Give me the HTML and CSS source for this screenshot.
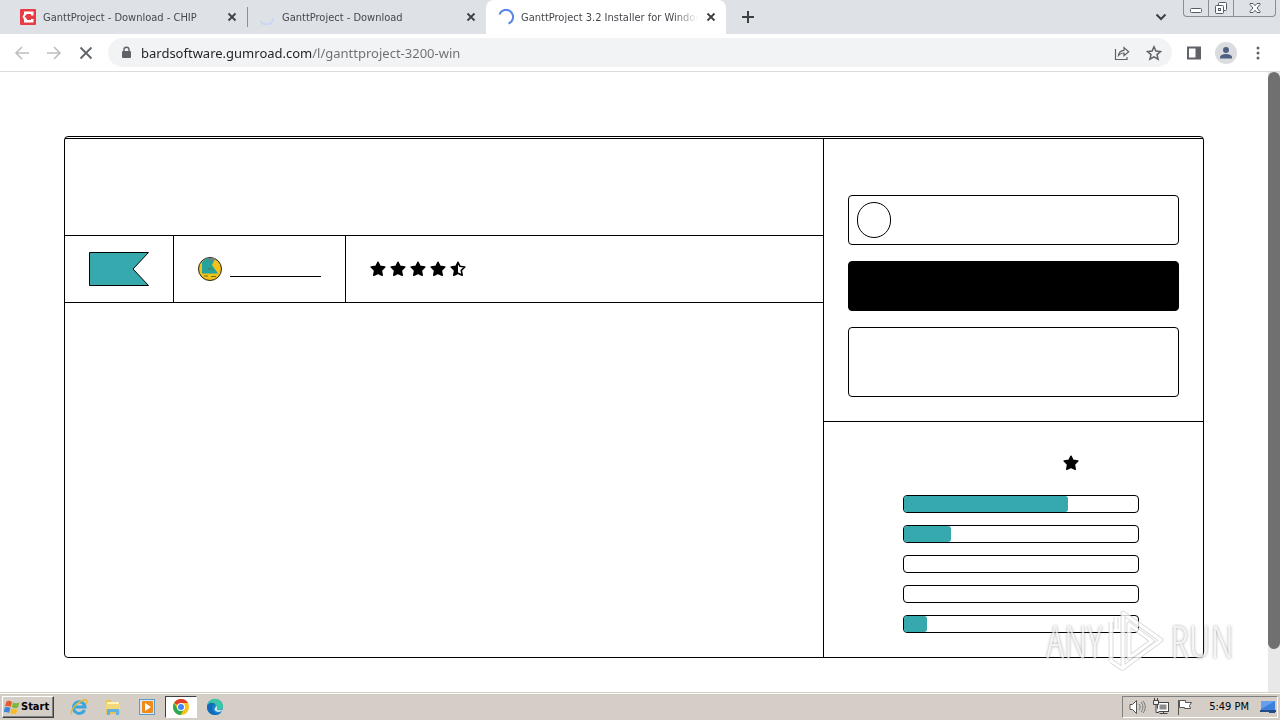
FILE: index.html
```html
<!DOCTYPE html>
<html lang="en">
<head>
	<meta charset="UTF-8">
	<meta name="viewport" content="width=device-width, initial-scale=1.0">
	<title>GanttProject 3.2 Installer for Windows</title>
	<link rel="stylesheet" href="styles.css">
</head>
<body>

	<svg class="defs" aria-hidden="true">
		<symbol id="star" viewBox="0 0 16 16">
			<path d="M8 1.300l2 4 4.800.7-3.500 3.400.9 4.800L8 12.300l-4.200 1.900.9-4.800L1.200 6 6 5.300z" stroke="#000" stroke-width="1.600" stroke-linejoin="round"/>
		</symbol>
		<symbol id="close" viewBox="0 0 10 10">
			<path d="M1.5 1.5l7 7M8.5 1.5l-7 7" stroke="#3c4043" stroke-width="1.8"/>
		</symbol>
	</svg>

	<header class="browser">
		<div class="tabs">
			<div class="tab">
				<svg class="tab__icon" viewBox="0 0 16 16"><rect width="16" height="16" rx="1" fill="#e63c46"/><path d="M4 2.500h9.500v4H11V5H7L4.500 7.500 7 10v1h4v-1h2.500v3.500H4v-3L2.500 7.500 4 5z" fill="#fff"/><path d="M7 5h4v2.500L9 9 6 7z" fill="#e63c46"/></svg>
				<a class="tab__title" href="#">GanttProject - Download - CHIP</a>
				<button class="tab__close" aria-label="Close tab"><svg viewBox="0 0 10 10"><use href="#close"/></svg></button>
			</div>
			<div class="tab tab--divided">
				<svg class="tab__icon" viewBox="0 0 16 16" fill="none" stroke="#c9d6f6" stroke-width="2"><path d="M14.500 9A7 7 0 0 1 1.500 12"/></svg>
				<a class="tab__title" href="#">GanttProject - Download</a>
				<button class="tab__close" aria-label="Close tab"><svg viewBox="0 0 10 10"><use href="#close"/></svg></button>
			</div>
			<div class="tab tab--active">
				<svg class="tab__icon" viewBox="0 0 16 16" fill="none" stroke="#5a86e6" stroke-width="2"><path d="M1.500 5.500A7 7 0 1 1 10.500 14.500"/></svg>
				<a class="tab__title" href="#">GanttProject 3.2 Installer for Windows</a>
				<button class="tab__close" aria-label="Close tab"><svg viewBox="0 0 10 10"><use href="#close"/></svg></button>
			</div>
			<button class="tabs__new" aria-label="New tab"><svg viewBox="0 0 12 12"><path d="M6 0v12M0 6h12" stroke="#3c4043" stroke-width="2"/></svg></button>
			<button class="tabs__search" aria-label="Search tabs"><svg viewBox="0 0 12 12"><path d="M1.500 3.500L6 8l4.500-4.500" fill="none" stroke="#3c4043" stroke-width="2"/></svg></button>
			<div class="window">
				<button class="window__btn" aria-label="Minimize"><svg viewBox="0 0 14 14"><rect x="1.500" y="7.500" width="11" height="4" rx="1" fill="#fff" stroke="#555b66"/></svg></button>
				<button class="window__btn" aria-label="Restore"><svg viewBox="0 0 14 14" fill="#fff" stroke="#555b66"><rect x="4.500" y="1.500" width="8" height="8" rx="1"/><rect x="1.500" y="4.500" width="8" height="8" rx="1"/><rect x="4.500" y="7.500" width="2" height="2"/></svg></button>
				<button class="window__btn window__btn--close" aria-label="Close"><svg viewBox="0 0 14 14"><path d="M2 2.500h3l2 2.200 2-2.200h3v1L9 7l3 3.500v1H9L7 9.300 5 11.500H2v-1L5 7 2 3.500z" fill="#fff" stroke="#555b66"/></svg></button>
			</div>
		</div>

		<div class="toolbar">
			<button class="toolbar__btn" aria-label="Back"><svg viewBox="0 0 16 16" fill="none" stroke="#bcbec1" stroke-width="1.600"><path d="M15 8H2M8 2L2 8l6 6"/></svg></button>
			<button class="toolbar__btn" aria-label="Forward"><svg viewBox="0 0 16 16" fill="none" stroke="#bcbec1" stroke-width="1.600"><path d="M1 8h13M8 2l6 6-6 6"/></svg></button>
			<button class="toolbar__btn" aria-label="Stop"><svg viewBox="0 0 16 16" fill="none" stroke="#5f6368" stroke-width="1.800"><path d="M2.500 2.500l11 11M13.500 2.500l-11 11"/></svg></button>
			<div class="address">
				<svg class="address__lock" viewBox="0 0 12 14"><rect x="2" y="5" width="9" height="7" rx="1" fill="#5f6368"/><path d="M4 5.500V3.800a2.500 2.500 0 0 1 5 0v1.700" fill="none" stroke="#5f6368" stroke-width="1.400"/></svg>
				<input class="address__input" type="text" aria-label="Address" value="bardsoftware.gumroad.com/l/ganttproject-3200-win">
				<button class="toolbar__btn" aria-label="Share"><svg viewBox="0 0 16 16" fill="none" stroke="#5f6368" stroke-width="1.200"><path d="M1.500 4v10.500h11.500V12M4.500 10.500C5 7 7 5.500 10 5.300V2.500l4.700 4.200-4.700 4V8C7.500 8 6 8.600 4.500 10.500z"/></svg></button>
				<button class="toolbar__btn" aria-label="Bookmark"><svg viewBox="0 0 16 16" fill="none" stroke="#5f6368" stroke-width="1.500"><path d="M8 1.800l1.900 4.300 4.600.4L11 9.600l1.100 4.600L8 11.800l-4.100 2.400L5 9.600 1.500 6.500l4.600-.4z"/></svg></button>
			</div>
			<button class="toolbar__btn" aria-label="Side panel"><svg viewBox="0 0 16 16"><path d="M1 1.500h14v13H1zM3 3.500v9h6.500v-9z" fill="#5f6368" fill-rule="evenodd"/></svg></button>
			<button class="toolbar__btn toolbar__btn--avatar" aria-label="Profile"><svg viewBox="0 0 22 22"><circle cx="11" cy="11" r="11" fill="#dadce0"/><circle cx="11" cy="8" r="3" fill="#4f5f82"/><path d="M5 16.500v-1.300c0-2 3.500-3.200 6-3.200s6 1.200 6 3.200v1.300z" fill="#4f5f82"/></svg></button>
			<button class="toolbar__btn" aria-label="Menu"><svg viewBox="0 0 16 16" fill="#5f6368"><circle cx="8" cy="3" r="1.500"/><circle cx="8" cy="8" r="1.500"/><circle cx="8" cy="13" r="1.500"/></svg></button>
		</div>
	</header>

	<div class="view">
		<main class="page">
			<article class="product">
				<section class="product__main">
					<div class="product__title"></div>
					<div class="details">
						<div class="details__cell">
							<svg class="price" viewBox="0 0 60 34"><path d="M.5.5h59L44 17l15.500 16.500H.5z" fill="#36a9ae" stroke="#000"/></svg>
						</div>
						<div class="details__cell details__cell--seller">
							<svg class="avatar" viewBox="0 0 24 24"><circle cx="12" cy="12" r="11.500" fill="#f3c318" stroke="#222"/><path d="M4 5L8 1.500l9 .5-3 6 6 8.500H4z" fill="#25a29b"/><path d="M9 1h8l-3 4z" fill="#70808a"/><path d="M10 12.500c2-2 4-1 5 1M6 19h4m3 .5h5" fill="none" stroke="#65752f"/></svg>
							<a class="seller" href="#" aria-label="Seller"></a>
						</div>
						<div class="details__cell details__cell--rating">
							<svg class="star"><use href="#star"/></svg>
							<svg class="star"><use href="#star"/></svg>
							<svg class="star"><use href="#star"/></svg>
							<svg class="star"><use href="#star"/></svg>
							<svg class="star" viewBox="0 0 16 16"><path d="M8 1.300l2 4 4.800.7-3.500 3.400.9 4.800L8 12.300l-4.200 1.900.9-4.800L1.200 6 6 5.300z" fill="none" stroke="#000" stroke-width="1.600" stroke-linejoin="round"/><path d="M8 1.300v11l-4.200 1.900.9-4.800L1.200 6 6 5.300z"/></svg>
						</div>
					</div>
				</section>

				<aside class="product__side">
					<section class="buy">
						<label class="amount">
							<span class="amount__currency"></span>
							<input class="amount__input" type="text" aria-label="Amount">
						</label>
						<button class="buy__btn" aria-label="Buy"></button>
						<div class="buy__info"></div>
					</section>
					<section class="ratings">
						<div class="ratings__head"><svg class="star"><use href="#star"/></svg></div>
						<div class="bar"><div class="bar__fill" style="width: 70%"></div></div>
						<div class="bar"><div class="bar__fill" style="width: 20%"></div></div>
						<div class="bar"></div>
						<div class="bar"></div>
						<div class="bar"><div class="bar__fill" style="width: 10%"></div></div>
					</section>
				</aside>
			</article>
		</main>
		<div class="scrollbar"><div class="scrollbar__thumb"></div></div>

		<div class="watermark">
			<span>ANY</span>
			<svg class="watermark__logo" viewBox="0 0 60 62" fill="none" stroke-linejoin="round"><g stroke="#d2d2d2" stroke-width="5"><path d="M17 3l38 27-38 28V3z"/><path d="M23 14v34l23-17zM5 12v39M10 7v12M5 51l12 8"/></g><g stroke="#fff" stroke-width="3"><path d="M17 3l38 27-38 28V3z"/><path d="M23 14v34l23-17zM5 12v39M10 7v12M5 51l12 8"/></g></svg>
			<span>RUN</span>
		</div>
	</div>

	<footer class="taskbar">
		<button class="start">
			<svg class="start__logo" viewBox="0 0 16 16"><path d="M2.500 2.500C5 1 6.500 2 8 3L6.700 8C5 7 3.500 6.500 1 7.500z" fill="#e8592b"/><path d="M9 3.500c2 1 4 1 6.500 0L14 8.500c-2 1-4 .8-6.300-.2z" fill="#7fb83c"/><path d="M.8 8.500c2.200-1 3.800-.7 5.600.4L5 14C3.500 13-1 12.800-.5 13.500z" fill="#3d87d6"/><path d="M7.400 9.400c2 1 4 1.200 6.300.3l-1.400 4.700c-2 1-4 .8-6.200-.3z" fill="#f7bd25"/></svg>
			Start
		</button>
		<nav class="apps">
			<button class="apps__btn" aria-label="Internet Explorer"><svg viewBox="0 0 18 18" fill="none"><path d="M14.500 12A5.800 5.800 0 1 1 15 9H4.500" stroke="#3ba5e0" stroke-width="3"/><path d="M2 16C-1 13 7 4 14 2c4-1 3 2 2 4" stroke="#e5b93b" stroke-width="1.500"/></svg></button>
			<button class="apps__btn" aria-label="Explorer"><svg viewBox="0 0 18 18"><path d="M2 2h5l1 2h8v12H2z" fill="#e6c35c"/><path d="M3 4h12v8H3z" fill="#fff3b5"/><path d="M2 6h14v6H2z" fill="#f2d878"/><path d="M3 17v-6h12v6h-3v-3H6v3z" fill="#64b2dd"/></svg></button>
			<button class="apps__btn" aria-label="Media Player"><svg viewBox="0 0 18 18"><rect x="1.500" y="1.500" width="15" height="15" fill="#d6e9f5" stroke="#5a9bc7"/><rect x="4" y="3" width="11" height="12" rx="1" fill="#f18a1d"/><path d="M7 5l6 4-6 4z" fill="#fff"/></svg></button>
			<button class="apps__btn apps__btn--active" aria-label="Chrome"><svg viewBox="0 0 18 18"><circle cx="9" cy="9" r="8" fill="#fbc116"/><path d="M9 9L2.100 5A8 8 0 0 1 16 5H9z" fill="#e33b2e"/><path d="M2.100 5A8 8 0 0 0 8.500 17l4-6.500L9 12l-3.500-1z" fill="#2da94f"/><circle cx="9" cy="9" r="4" fill="#fff"/><circle cx="9" cy="9" r="3" fill="#4285f4"/></svg></button>
			<button class="apps__btn" aria-label="Edge"><svg viewBox="0 0 18 18"><circle cx="9" cy="9" r="8" fill="#1683d0"/><path d="M1 9a8 8 0 0 1 16-.500c0 3-3 4-6 3 1.500-1.500 0-4.500-3-4.500-3.500 0-5.500 1.500-7 2z" fill="#3bc6a5"/><path d="M1 9c0-4 6-6 9-2-4-1-5 4-2 7 2 2 5 2 7.500 0C12 19 1 18 1 9z" fill="#126bb9"/><path d="M10.500 8c2 2-.5 3 1 4 2 .7 4 .3 5.500-.500-2 3-6 3-8 1-1-1.500 0-3 1.500-4.500z" fill="#d5ebf3"/></svg></button>
		</nav>
		<div class="tray">
			<svg class="tray__icon" viewBox="0 0 18 18" fill="#fff" stroke="#555"><path d="M2 6.500h2.500l4-4v13l-4-4H2z"/><path d="M11 6c1.500 2 1.500 4 0 6M13 4c2.500 3 2.500 7 0 10M15 3c3 4 3 8 0 12" fill="none" stroke="#777"/></svg>
			<svg class="tray__icon" viewBox="0 0 18 18" fill="#fff" stroke="#444"><rect x="5.500" y="4.500" width="11" height="9"/><rect x="7.500" y="6.500" width="7" height="5" fill="#8c8c8c" stroke="none"/><path d="M7.500 15.500h8M11.500 13.500v2M1.500 2.500h5v4h-5zM2.500 0v2M5.500 0v2M4 7v7.500h3" fill="#eee"/></svg>
			<svg class="tray__icon" viewBox="0 0 18 18" fill="#fff" stroke="#555"><path d="M2.500 2v15M3.500 2.500h6v2h6l-2 3 1 3h-6v-1h-5z"/></svg>
			<time class="tray__clock">5:49 PM</time>
			<svg class="tray__desktop" viewBox="0 0 16 16"><path d="M1 2h14v10H1z" fill="#3d7fdc"/><path d="M1 2h14L1 10z" fill="#66a0ed"/><path d="M0 11h16v2H0zM9 13h6v1H9z" fill="#234b87"/></svg>
		</div>
	</footer>

</body>
</html>
```
FILE: styles.css
```css
* {
    margin: 0;
    padding: 0;
    box-sizing: border-box;
}

body {
    display: flex;
    flex-direction: column;
    height: 100vh;
    overflow: hidden;
    font-family: 'DejaVu Sans Condensed', 'DejaVu Sans', sans-serif;
    font-size: 11px;
    color: #000;
    background: #fff;
}

button,
input {
    border: none;
    background: none;
    font: inherit;
    color: inherit;
}

a {
    color: inherit;
    text-decoration: none;
}

svg {
    display: block;
    flex: none;
}

.defs {
    position: absolute;
    width: 0;
    height: 0;
}

/* tabs */
.tabs {
    display: flex;
    align-items: center;
    height: 34px;
    padding: 0 4px 0 8px;
    background: #dee1e6;
}

.tab {
    display: flex;
    align-items: center;
    flex: 0 1 239px;
    height: 34px;
    min-width: 0;
    padding: 0 7px 0 12px;
    color: #45484c;
}

.tab--divided {
    border-left: 1px solid #8b8e94;
    height: 20px;
    padding-left: 11px;
}

.tab--active {
    flex-basis: 240px;
    border-radius: 8px 8px 0 0;
    background: #fff;
}

.tab__icon {
    width: 16px;
    height: 16px;
    margin-right: 7px;
}

.tab__title {
    flex: 1;
    min-width: 0;
    overflow: hidden;
    white-space: nowrap;
    mask-image: linear-gradient(to left, transparent, #000 24px);
}

.tab__close {
    width: 16px;
    height: 16px;
    padding: 3px;
    margin-left: 5px;
}

.tab__close svg {
    width: 10px;
    height: 10px;
}

.tabs__new {
    padding: 0 16px;
}

.tabs__new svg,
.tabs__search svg {
    width: 12px;
    height: 12px;
}

.tabs__search {
    margin-left: auto;
    padding: 0 16px;
}

.window {
    display: flex;
    align-self: flex-start;
    height: 17px;
    border: 1px solid #8a8e96;
    border-top: none;
    border-radius: 0 0 4px 4px;
}

.window__btn {
    display: flex;
    justify-content: center;
    align-items: center;
    width: 25px;
    border-right: 1px solid #8a8e96;
}

.window__btn--close {
    width: 41px;
    border-right: none;
}

.window__btn svg {
    width: 14px;
    height: 14px;
}

/* toolbar */
.toolbar {
    display: flex;
    align-items: center;
    gap: 16px;
    height: 38px;
    padding: 0 14px;
    border-bottom: 1px solid #dcdcdc;
}

.toolbar__btn svg {
    width: 16px;
    height: 16px;
}

.toolbar__btn--avatar svg {
    width: 22px;
    height: 22px;
}

.toolbar__btn--avatar {
    margin: 0 -3px;
}

.address {
    display: flex;
    align-items: center;
    flex: 1;
    gap: 16px;
    height: 29px;
    padding: 0 10px 0 12px;
    margin: 0 -2px;
    border-radius: 15px;
    background: #f1f3f4;
}

.address__lock {
    width: 12px;
    height: 14px;
    margin-right: -7px;
}

/* host is black, path is grey */
.address__input {
    flex: 1;
    min-width: 0;
    font-family: 'Noto Sans', sans-serif;
    font-size: 13px;
    outline: none;
    color: transparent;
    background: linear-gradient(to right, #202124 171px, #6b6f74 171px);
    -webkit-background-clip: text;
    background-clip: text;
}

/* page */
.view {
    position: relative;
    display: flex;
    flex: 1;
    min-height: 0;
}

.page {
    display: flex;
    flex: 1;
    padding: 64px 64px 34px;
}

.product {
    display: grid;
    grid-template-columns: 1fr 380px;
    flex: 1;
    border: 1px solid #000;
    border-radius: 4px;
    padding-top: 1px;
}

.product__main,
.product__side {
    border-top: 1px solid #000;
}

.product__side {
    border-left: 1px solid #000;
}

.product__title {
    height: 96px;
}

.details {
    display: flex;
    border: 1px solid #000;
    border-width: 1px 0;
}

.details__cell {
    display: flex;
    align-items: center;
    height: 66px;
    padding: 0 24px;
    border-right: 1px solid #000;
}

.details__cell--seller {
    gap: 8px;
}

.details__cell--rating {
    gap: 4px;
    border-right: none;
}

.price {
    width: 60px;
    height: 34px;
}

.avatar {
    width: 24px;
    height: 24px;
}

.seller {
    width: 91px;
    height: 16px;
    border-bottom: 1px solid #000;
}

.star {
    width: 16px;
    height: 16px;
}

.buy {
    display: flex;
    flex-direction: column;
    gap: 16px;
    padding: 56px 24px 24px;
    border-bottom: 1px solid #000;
}

.amount,
.buy__btn,
.buy__info {
    height: 50px;
    border: 1px solid #000;
    border-radius: 4px;
}

.amount {
    display: flex;
    align-items: center;
    gap: 8px;
    padding: 0 8px;
}

.amount__currency {
    width: 34px;
    height: 36px;
    border: 1px solid #000;
    border-radius: 18px;
}

.amount__input {
    flex: 1;
    outline: none;
}

.buy__btn {
    background: #000;
}

.buy__info {
    height: 70px;
}

.ratings {
    display: flex;
    flex-direction: column;
    gap: 12px;
    padding: 33px 64px 24px 79px;
}

.ratings__head {
    display: flex;
    justify-content: flex-end;
    height: 28px;
    padding-right: 60px;
}

.bar {
    height: 18px;
    border: 1px solid #000;
    border-radius: 4px;
}

.bar__fill {
    height: 100%;
    border-radius: 3px;
    background: #36a9ae;
}

.scrollbar {
    width: 12px;
    background: #e8e8e8;
}

.scrollbar__thumb {
    height: 93%;
    border-radius: 6px;
    background: #707070;
}

.watermark {
    position: absolute;
    right: 46px;
    bottom: 20px;
    display: flex;
    align-items: center;
    gap: 4px;
    font-family: 'Open Sans Condensed Light', 'Open Sans Condensed', 'Liberation Sans Narrow', sans-serif;
    font-size: 44px;
    font-weight: 300;
    line-height: 62px;
    color: rgba(255, 255, 255, 0.8);
    text-shadow: 0 0 3px #888;
    opacity: 0.8;
    pointer-events: none;
}

.watermark__logo {
    width: 60px;
    height: 62px;
}

/* taskbar */
.taskbar {
    display: flex;
    align-items: center;
    height: 28px;
    padding: 2px;
    border-top: 1px solid #d5cec7;
    box-shadow: inset 0 1px #fff;
    background: #d5cec7;
}

.start {
    display: flex;
    align-items: center;
    gap: 1px;
    height: 22px;
    padding: 0 4px 0 1px;
    border: 1px solid #404040;
    border-top-color: #fff;
    border-left-color: #fff;
    box-shadow: inset -1px -1px #808080;
    font-weight: bold;
}

.start__logo {
    width: 16px;
    height: 16px;
}

.apps {
    display: flex;
    gap: 2px;
    margin-left: 9px;
}

.apps__btn {
    display: flex;
    justify-content: center;
    align-items: center;
    width: 32px;
    height: 22px;
}

.apps__btn--active {
    border: 1px solid #fff;
    border-top-color: #404040;
    border-left-color: #404040;
    background: #fff;
}

.apps__btn svg {
    width: 18px;
    height: 18px;
}

.tray {
    display: flex;
    align-items: center;
    gap: 6px;
    height: 22px;
    margin-left: auto;
    padding: 0 1px 0 5px;
    border: 1px solid #fff;
    border-top-color: #808080;
    border-left-color: #808080;
}

.tray__icon {
    width: 18px;
    height: 18px;
}

.tray__clock {
    padding: 0 5px 0 9px;
}

.tray__desktop {
    width: 16px;
    height: 16px;
}
```
